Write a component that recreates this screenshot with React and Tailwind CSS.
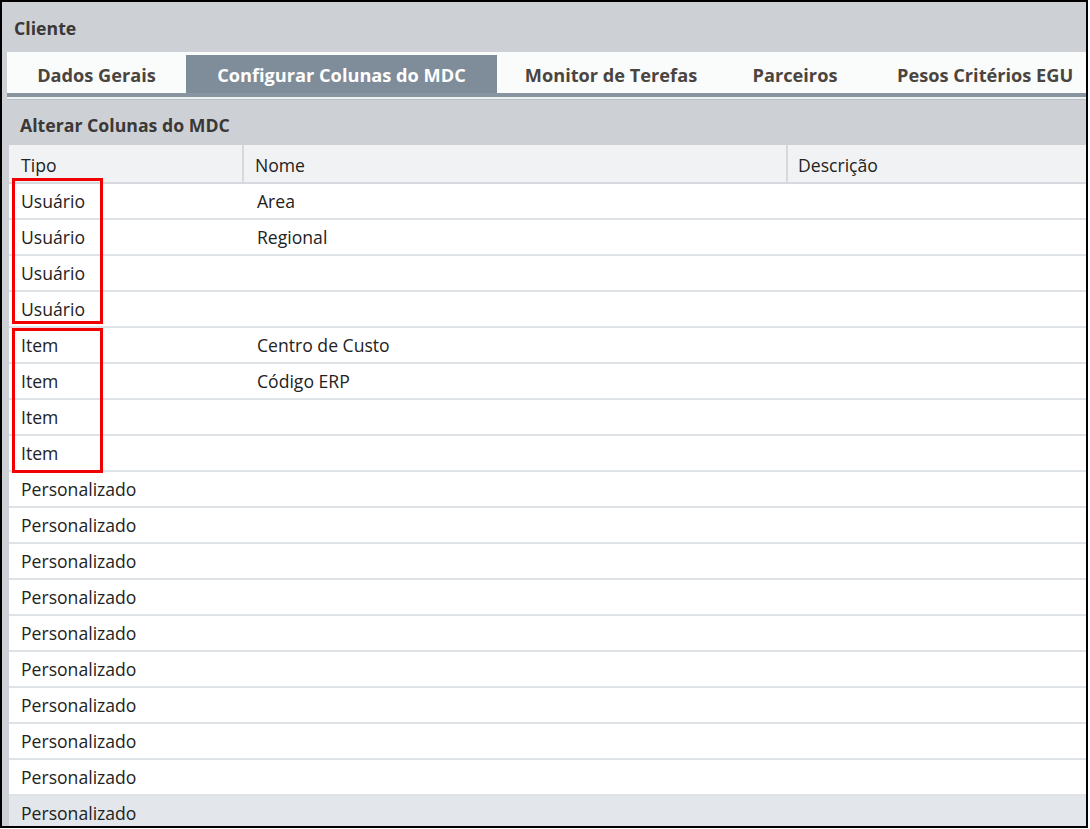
import React from 'react';

const tabs = [
  { label: 'Dados Gerais', w: 'w-[179px] justify-center' },
  { label: 'Configurar Colunas do MDC', w: 'w-[311px] justify-center', active: true },
  { label: 'Monitor de Terefas', w: 'w-[228px] justify-center' },
  { label: 'Parceiros', w: 'w-[140px] justify-center' },
  { label: 'Pesos Critérios EGU', w: 'flex-1 justify-start pl-[32px]' },
];

const rows = [
  ['Usuário', 'Area'],
  ['Usuário', 'Regional'],
  ['Usuário', ''],
  ['Usuário', ''],
  ['Item', 'Centro de Custo'],
  ['Item', 'Código ERP'],
  ['Item', ''],
  ['Item', ''],
  ...Array.from({ length: 10 }, () => ['Personalizado', '']),
];

export default function App() {
  return (
    <div className="w-[1088px] h-[828px] border-2 border-black bg-[#cdd1d6] overflow-hidden flex flex-col font-['Segoe_UI','Open_Sans',sans-serif]">
      {/* cabeçalho do cliente */}
      <div className="h-[50px] shrink-0 flex items-center pl-[12px] pt-[2px] text-[17.7px] font-bold text-[#3b3835]">
        Cliente
      </div>

      <div className="flex-1 ml-[5px] flex flex-col min-h-0">
        {/* abas */}
        <div className="h-[41px] shrink-0 bg-[#fafbfb] flex items-end">
          {tabs.map((t) => (
            <div
              key={t.label}
              className={`${t.w} shrink-0 h-[38px] pt-[4px] flex items-center whitespace-nowrap text-[18.2px] font-bold ${
                t.active ? 'bg-[#7f8c99] text-white' : 'text-[#4a4540]'
              }`}
            >
              {t.label}
            </div>
          ))}
        </div>
        <div className="h-[4px] shrink-0 bg-[#8894a0]" />
        <div className="h-[2px] shrink-0 bg-[#eceef0]" />
        <div className="h-[1px] shrink-0 bg-[#b8bfc6]" />

        {/* painel de colunas */}
        <div className="flex-1 ml-[2px] flex flex-col min-h-0 bg-white">
          <div className="h-[45px] shrink-0 bg-[#cdd1d6] flex items-center pl-[11px] pt-[5px] text-[17.7px] font-bold text-[#3b3835]">
            Alterar Colunas do MDC
          </div>
          <div className="h-[39px] shrink-0 bg-[#f1f2f3] border-b-2 border-[#d5d9dd] flex text-[17.6px] text-[#222]">
            <div className="w-[235px] flex items-center pl-[12px] pt-[3px] border-r-2 border-[#d5d9dd]">Tipo</div>
            <div className="w-[544px] flex items-center pl-[11px] pt-[3px] border-r-2 border-[#d5d9dd]">Nome</div>
            <div className="flex-1 flex items-center pl-[10px] pt-[3px]">Descrição</div>
          </div>

          <div className="relative flex-1 min-h-0">
            {rows.map(([tipo, nome], i) => (
              <div
                key={i}
                className={`h-[36px] flex text-[17.6px] text-[#222] border-b-2 border-[#dfe2e6] ${
                  i === rows.length - 1 ? 'bg-[#e3e6ea]' : 'bg-white'
                }`}
              >
                <div className="w-[237px] flex items-center pl-[12px]">{tipo}</div>
                <div className="w-[546px] flex items-center pl-[11px]">{nome}</div>
                <div className="flex-1" />
              </div>
            ))}

            {/* destaques */}
            <div className="absolute left-[3px] top-[-6px] w-[91px] h-[146px] border-[3px] border-[#f00000]" />
            <div className="absolute left-[3px] top-[144px] w-[91px] h-[145px] border-[3px] border-[#f00000]" />
          </div>
        </div>
      </div>
    </div>
  );
}
